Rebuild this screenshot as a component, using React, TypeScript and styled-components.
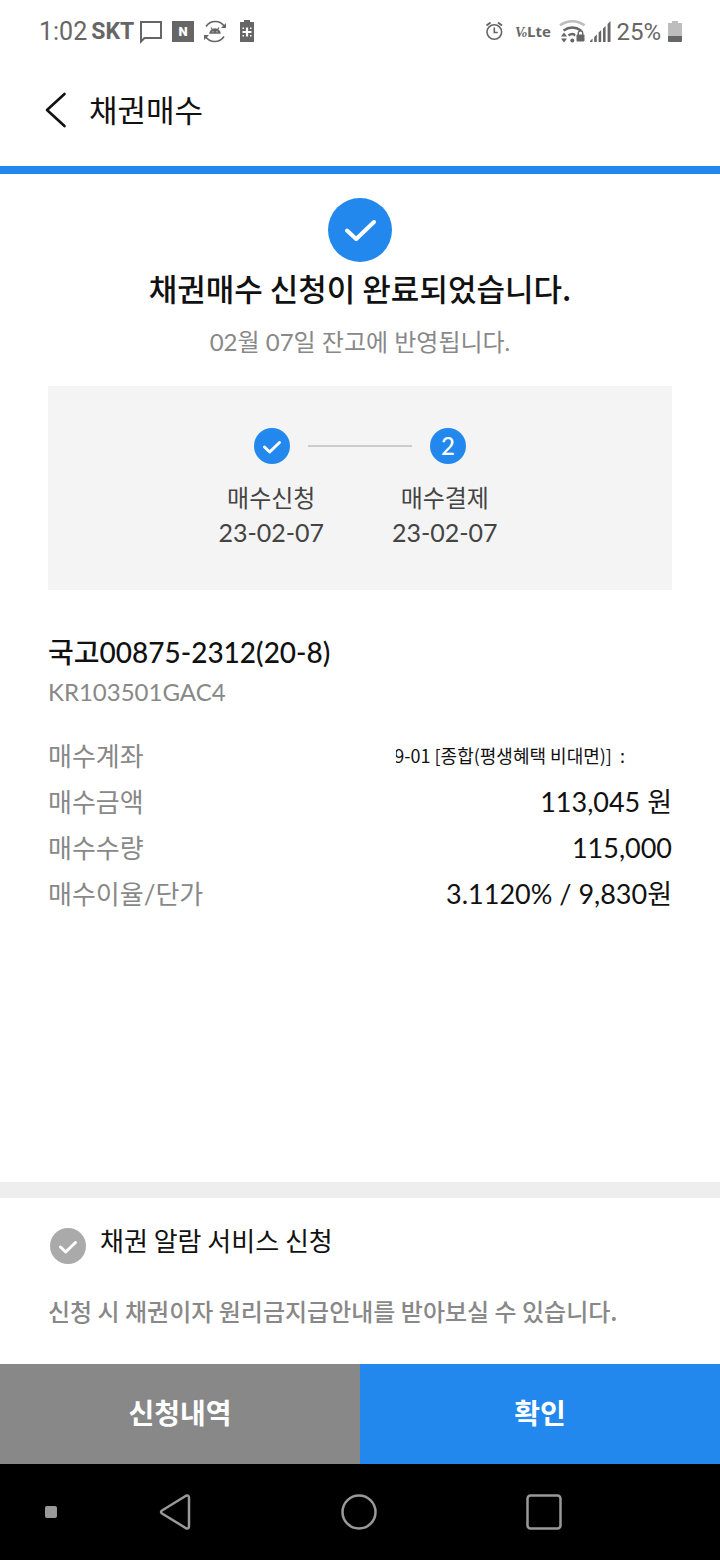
import React from "react";
import styled, { createGlobalStyle } from "styled-components";

const BLUE = "#2388ee";
const INK = "#111111";
const MUTED = "#888888";
const STATUS = "#666666";
const FAINT = "#bdbdbd";
const LATIN_STACK = `Lato, "Noto Sans CJK KR", sans-serif`;
const KOREAN_STACK = `"Noto Sans CJK KR", sans-serif`;

const GlobalStyle = createGlobalStyle`
  * { box-sizing: border-box; }
  body { margin: 0; background: #ffffff; font-family: ${KOREAN_STACK}; color: ${INK}; }
  button { font: inherit; border: 0; padding: 0; background: none; cursor: pointer; }
  h1, h2, p, dl, dd, dt, ol { margin: 0; padding: 0; }
`;

const Page = styled.div`
  display: flex;
  flex-direction: column;
  min-height: 100vh;
`;

const StatusBar = styled.div`
  display: flex;
  align-items: center;
  justify-content: space-between;
  height: 64px;
  padding: 0 37px 0 39px;
  color: ${STATUS};
  font-family: Roboto, sans-serif;
  font-size: 25px;
  line-height: 32px;
`;

const StatusGroup = styled.div`
  display: flex;
  align-items: center;
  gap: 4px;
`;

const Carrier = styled.span`
  font-weight: 700;
  font-size: 23px;
`;

const BatteryLevel = styled.span`
  margin-right: 2px;
  font-size: 24px;
`;

const Header = styled.header`
  display: flex;
  align-items: center;
  gap: 22px;
  height: 110px;
  padding: 0 45px 10px;
  border-bottom: 8px solid ${BLUE};
`;

const BackButton = styled.button`
  display: flex;
`;

const HeaderTitle = styled.h1`
  padding-bottom: 2px;
  font-size: 31px;
  font-weight: 400;
  line-height: 40px;
`;

const Main = styled.main`
  flex: 1;
  display: flex;
  flex-direction: column;
  padding: 24px 48px;
`;

const Badge = styled.span<{ $size: number }>`
  display: flex;
  flex: none;
  align-items: center;
  justify-content: center;
  width: ${(p) => p.$size}px;
  height: ${(p) => p.$size}px;
  border-radius: 50%;
  background: ${BLUE};
  color: #ffffff;
  font-family: ${LATIN_STACK};
  font-size: 24px;
  font-weight: 500;
  line-height: 36px;
`;

const Summary = styled.section`
  display: flex;
  flex-direction: column;
  align-items: center;
`;

const SummaryTitle = styled.h2`
  margin-top: 2px;
  font-size: 31px;
  font-weight: 500;
  line-height: 48px;
`;

const SummaryNote = styled.p`
  margin-top: 12px;
  font-family: ${LATIN_STACK};
  font-size: 24px;
  line-height: 36px;
  color: ${MUTED};
`;

const Steps = styled.section`
  display: flex;
  flex-direction: column;
  align-items: center;
  gap: 16px;
  height: 204px;
  margin-top: 26px;
  padding-top: 42px;
  background: #f4f4f4;
  color: #444444;
`;

const StepTrack = styled.div`
  display: flex;
  align-items: center;
  gap: 18px;
`;

const StepLine = styled.span`
  width: 104px;
  height: 2px;
  background: #cccccc;
`;

const StepLabels = styled.ol`
  display: flex;
  gap: 68px;
  padding-right: 4px;
  list-style: none;
  font-family: ${LATIN_STACK};
  font-size: 24px;
  line-height: 35px;
  text-align: center;
`;

const StepLabel = styled.li`
  display: flex;
  flex-direction: column;
`;

const StepDate = styled.span`
  font-size: 25px;
`;

const BondName = styled.h2`
  margin-top: 42px;
  font-family: ${LATIN_STACK};
  font-size: 28px;
  font-weight: 500;
  line-height: 40px;
`;

const BondCode = styled.p`
  font-family: ${LATIN_STACK};
  font-size: 24px;
  line-height: 40px;
  color: ${MUTED};
`;

const Details = styled.dl`
  margin-top: 21px;
`;

const DetailRow = styled.div`
  display: flex;
  justify-content: space-between;
  align-items: center;
  height: 46px;
  line-height: 46px;
`;

const Term = styled.dt`
  font-family: ${LATIN_STACK};
  font-size: 26px;
  color: ${MUTED};
`;

const Value = styled.dd`
  font-family: ${LATIN_STACK};
  font-size: 27px;
`;

const AccountValue = styled.dd`
  display: flex;
  justify-content: flex-end;
  width: 229px;
  margin-right: 47px;
  padding-bottom: 2px;
  overflow: hidden;
  white-space: pre;
  font-size: 18px;
`;

const AlarmSection = styled.section`
  padding: 22px 48px 35px;
  border-top: 16px solid #eeeeee;
`;

const AlarmLabel = styled.label`
  display: flex;
  align-items: flex-start;
  gap: 14px;
  padding-left: 2px;
  font-size: 26px;
  line-height: 40px;
  cursor: pointer;
`;

const AlarmCheck = styled.input`
  appearance: none;
  flex: none;
  width: 36px;
  height: 36px;
  margin: 8px 0 0;
  border-radius: 50%;
  background: #aaaaaa;
  &:checked { background: ${BLUE}; }
`;

const CheckHolder = styled.span`
  position: relative;
  display: flex;
  svg { position: absolute; left: 0; top: 8px; pointer-events: none; }
`;

const AlarmNote = styled.p`
  margin-top: 29px;
  font-size: 24px;
  font-weight: 500;
  line-height: 36px;
  color: ${MUTED};
`;

const Actions = styled.div`
  display: grid;
  grid-template-columns: 1fr 1fr;
`;

const ActionButton = styled.button<{ $primary?: boolean }>`
  && {
    height: 100px;
    padding-bottom: 4px;
    background: ${(p) => (p.$primary ? BLUE : MUTED)};
    color: #ffffff;
    font-size: 28px;
    font-weight: 700;
  }
`;

const NavBar = styled.nav`
  display: flex;
  align-items: center;
  height: 96px;
  padding: 0 45px;
  background: #000000;
`;

const NavDot = styled.span`
  width: 12px;
  height: 12px;
  border-radius: 2px;
  background: #999999;
`;

const NavKeys = styled.div`
  flex: 1;
  display: flex;
  justify-content: space-between;
  padding: 0 111px 0 101px;
`;

const NavButton = styled.button`
  display: flex;
`;

const SmallTick = () => (
  <svg width="36" height="36" viewBox="0 0 36 36" fill="none" stroke="#fff" strokeWidth="3" strokeLinecap="round" strokeLinejoin="round" aria-hidden="true">
    <path d="M10.500 19l5.200 5 9.800-9.500" />
  </svg>
);

const BigTick = () => (
  <svg width="64" height="64" viewBox="0 0 64 64" fill="none" stroke="#fff" strokeWidth="4" strokeLinecap="round" strokeLinejoin="round" aria-hidden="true">
    <path d="M19 32.500l9.200 8.500L46 24" />
  </svg>
);

const NotificationIcons = () => (
  <svg width="118" height="26" viewBox="0 0 118 26" aria-hidden="true">
    <path d="M3 3h20v16H6.500L3 22.500z" fill="none" stroke={STATUS} strokeWidth="2" />
    <rect x="34" y="2" width="22" height="21" fill={STATUS} />
    <text x="45" y="17" textAnchor="middle" fontFamily="Roboto" fontWeight="900" fontSize="13" fill="#fff">N</text>
    <path d="M68 7.500a11 11 0 0 1 18.500 0M86 17.500a11 11 0 0 1-18.500 0" fill="none" stroke={STATUS} strokeWidth="1.600" />
    <path d="M88 4v5h-5zM66 21v-5h5z" fill={STATUS} />
    <path d="M71.200 14.800a5.800 5.500 0 0 1 11.600 0z" fill={STATUS} />
    <path d="M73 8.500l2 3M81 8.500l-2 3" stroke={STATUS} strokeWidth="1.200" />
    <path d="M74.500 12.800h1M78.500 12.800h1" stroke="#fff" strokeWidth="1" />
    <path d="M102 3h4V1h6v2h4v20h-14z" fill={STATUS} />
    <path d="M109 8.500v9M104.500 13h9" stroke="#fff" strokeWidth="2.200" />
    <path d="M104.500 9.200h1.500M112 9.200h1.500M104.500 16.800h1.500M112 16.800h1.500" stroke="#fff" strokeWidth="1.500" />
  </svg>
);

const SignalIcons = () => (
  <svg width="128" height="26" viewBox="0 0 128 26" aria-hidden="true">
    <g fill="none" stroke={STATUS} strokeWidth="1.600">
      <circle cx="10.300" cy="13" r="7.300" />
      <path d="M10.300 8.500V13.500h3.500" />
      <path d="M2.500 6.500l4-3M18 6.500l-4-3" strokeWidth="2" />
    </g>
    <g fill={STATUS}>
      <text x="31" y="18" fontFamily="Liberation Serif" fontStyle="italic" fontWeight="700" fontSize="14">V</text>
      <text x="38" y="18" fontFamily="Liberation Serif" fontStyle="italic" fontWeight="700" fontSize="10">o</text>
      <text x="43" y="18" fontFamily="Open Sans" fontWeight="700" fontSize="15">Lte</text>
    </g>
    <path d="M76 6.200q12.300-8 24.600 0" fill="none" stroke={FAINT} strokeWidth="2.400" />
    <path d="M79.500 11.500q8.800-6 17.600 0M84.500 16.500q3.800-3 7 0" fill="none" stroke={STATUS} strokeWidth="2.400" />
    <path d="M77 17.500l3-4 3 4zM77 19.500l3 4 3-4z" fill={STATUS} />
    <circle cx="88.300" cy="21.500" r="2" fill={STATUS} />
    <path d="M91.500 14.500h9.500v9h-9.500z" fill="#fff" />
    <rect x="92.500" y="15.500" width="8" height="7" rx="1" fill={STATUS} />
    <path d="M94.300 16v-2a2.200 2.200 0 0 1 4.400 0v2" fill="none" stroke={STATUS} strokeWidth="1.400" />
    <path d="M106 23v-1l2.500-2.500V23zM110.200 23v-5l2.600-2.500V23zM114.600 23v-9.500l2.600-2.500V23zM119 23V9.500l2.600-2.500V23zM123.600 23V5l2.900-3v21z" fill={STATUS} />
  </svg>
);

const BatteryIcon = () => (
  <svg width="16" height="24" viewBox="0 0 16 24" aria-hidden="true">
    <path d="M1 3h4V1h6v2h4v13H1z" fill={FAINT} />
    <path d="M1 16h14v5q0 1-1 1H2q-1 0-1-1z" fill={STATUS} />
  </svg>
);

const details = [
  { term: "매수금액", value: "113,045 원" },
  { term: "매수수량", value: "115,000" },
  { term: "매수이율/단가", value: "3.1120% / 9,830원" },
];

const steps = [
  { label: "매수신청", date: "23-02-07" },
  { label: "매수결제", date: "23-02-07" },
];

export default function App() {
  return (
    <Page>
      <GlobalStyle />
      <StatusBar>
        <StatusGroup>
          <span>1:02</span>
          <Carrier>SKT</Carrier>
          <NotificationIcons />
        </StatusGroup>
        <StatusGroup>
          <SignalIcons />
          <BatteryLevel>25%</BatteryLevel>
          <BatteryIcon />
        </StatusGroup>
      </StatusBar>

      <Header>
        <BackButton type="button" aria-label="뒤로">
          <svg width="22" height="36" viewBox="0 0 22 36" fill="none" stroke={INK} strokeWidth="2.600" strokeLinecap="round" strokeLinejoin="round">
            <path d="M19.500 2L2 18l17.500 16" />
          </svg>
        </BackButton>
        <HeaderTitle>채권매수</HeaderTitle>
      </Header>

      <Main>
        <Summary>
          <Badge $size={64}>
            <BigTick />
          </Badge>
          <SummaryTitle>채권매수 신청이 완료되었습니다.</SummaryTitle>
          <SummaryNote>02월 07일 잔고에 반영됩니다.</SummaryNote>
        </Summary>

        <Steps>
          <StepTrack>
            <Badge $size={36}>
              <SmallTick />
            </Badge>
            <StepLine />
            <Badge $size={36}>2</Badge>
          </StepTrack>
          <StepLabels>
            {steps.map((s) => (
              <StepLabel key={s.label}>
                <span>{s.label}</span>
                <StepDate>{s.date}</StepDate>
              </StepLabel>
            ))}
          </StepLabels>
        </Steps>

        <BondName>국고00875-2312(20-8)</BondName>
        <BondCode>KR103501GAC4</BondCode>
        <Details>
          <DetailRow>
            <Term>매수계좌</Term>
            <AccountValue>{"9-01 [종합(평생혜택 비대면)]  :"}</AccountValue>
          </DetailRow>
          {details.map((d) => (
            <DetailRow key={d.term}>
              <Term>{d.term}</Term>
              <Value>{d.value}</Value>
            </DetailRow>
          ))}
        </Details>
      </Main>

      <AlarmSection>
        <AlarmLabel>
          <CheckHolder>
            <AlarmCheck type="checkbox" />
            <SmallTick />
          </CheckHolder>
          채권 알람 서비스 신청
        </AlarmLabel>
        <AlarmNote>신청 시 채권이자 원리금지급안내를 받아보실 수 있습니다.</AlarmNote>
      </AlarmSection>

      <Actions>
        <ActionButton type="button">신청내역</ActionButton>
        <ActionButton type="button" $primary>확인</ActionButton>
      </Actions>

      <NavBar>
        <NavDot />
        <NavKeys>
          <NavButton type="button" aria-label="이전">
            <svg width="36" height="40" viewBox="0 0 36 40" fill="none" stroke="#999" strokeWidth="2.500" strokeLinejoin="round">
              <path d="M28 3.800L4 18.500q-2 1.500 0 3L28 36.200q3 1 3-2V5.800q0-3-3-2z" />
            </svg>
          </NavButton>
          <NavButton type="button" aria-label="홈">
            <svg width="40" height="40" viewBox="0 0 40 40" fill="none" stroke="#999" strokeWidth="2.500">
              <circle cx="20" cy="20" r="16.500" />
            </svg>
          </NavButton>
          <NavButton type="button" aria-label="최근 앱">
            <svg width="40" height="40" viewBox="0 0 40 40" fill="none" stroke="#999" strokeWidth="2.500">
              <rect x="3.500" y="3.500" width="33" height="33" rx="3" />
            </svg>
          </NavButton>
        </NavKeys>
      </NavBar>
    </Page>
  );
}
